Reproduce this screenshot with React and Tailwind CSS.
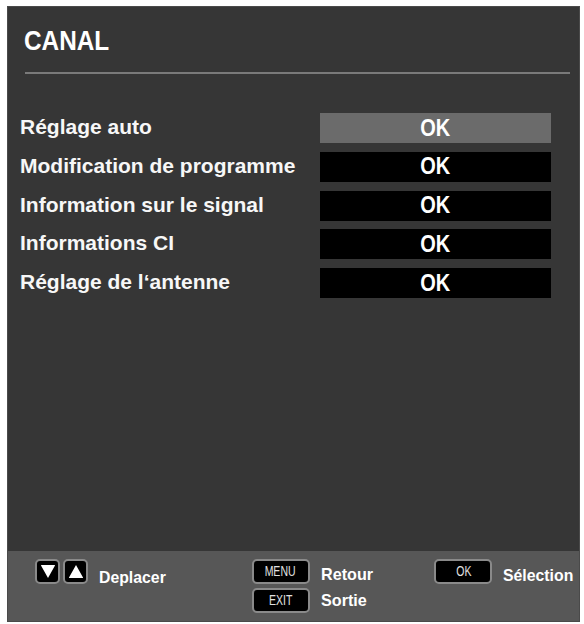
import React from 'react';

const font = { fontFamily: '"Liberation Sans", Arial, sans-serif' };

const rows = [
    { label: 'Réglage auto', active: true },
    { label: 'Modification de programme' },
    { label: 'Information sur le signal' },
    { label: 'Informations CI' },
    { label: 'Réglage de l‘antenne' },
];

const ArrowKey = ({ up }) => (
    <div className="w-[25px] h-[25px] rounded-[5px] bg-black border-2 border-[#8a8a8a] flex items-center justify-center">
        <svg width="16" height="15" viewBox="0 0 16 15">
            {up ? (
                <path d="M8 1 L15 13.5 Q15.3 14 14.5 14 L1.5 14 Q0.7 14 1 13.5 Z" fill="#fff" />
            ) : (
                <path d="M8 14 L15 1.5 Q15.3 1 14.5 1 L1.5 1 Q0.7 1 1 1.5 Z" fill="#fff" />
            )}
        </svg>
    </div>
);

const Key = ({ children }) => (
    <div className="w-[58px] h-[25px] rounded-[5px] bg-black border-2 border-[#8a8a8a] flex items-center justify-center font-normal text-[15px] text-[#e0e0e0]">
        <span className="inline-block scale-x-[0.7]">{children}</span>
    </div>
);

export default function App() {
    return (
        <div className="w-[584px] h-[624px] bg-white pl-[7px] pt-[6px] pr-[4px] pb-[2px]" style={font}>
            <div className="h-full flex flex-col bg-[#363636] border border-[#4a4a4a]">
                <div className="pt-[20px] pl-[16px] text-[28px] leading-none font-bold text-white">
                    <span className="inline-block origin-left scale-x-[0.87]">CANAL</span>
                </div>
                <div className="ml-[17px] mt-[17px] w-[545px] h-[2px] bg-[#7a7a7a]" />

                <div className="mt-[39px] flex flex-col gap-[8.75px]">
                    {rows.map((row) => (
                        <div key={row.label} className="flex items-center h-[30px]">
                            <div className="pl-[12px] w-[312px] text-[21px] font-bold text-[#f7f7f7] leading-none -mt-[3px]">
                                {row.label}
                            </div>
                            <div
                                className={`w-[231px] h-full flex items-center justify-center text-[23px] font-bold text-white leading-none ${
                                    row.active ? 'bg-[#6b6b6b]' : 'bg-black'
                                }`}
                            >
                                <span className="inline-block scale-x-[0.87]">OK</span>
                            </div>
                        </div>
                    ))}
                </div>

                <div className="flex-1" />

                <div className="h-[70px] bg-[#575757] flex pl-[27px] pt-[8px] text-white font-bold text-[17px]">
                    <div className="w-[219px] flex items-start gap-[3px]">
                        <ArrowKey />
                        <ArrowKey up />
                        <span className="ml-[8px] mt-[10px] leading-none inline-block origin-left scale-x-[0.93]">Deplacer</span>
                    </div>
                    <div className="w-[185px] flex flex-col gap-[4px]">
                        <div className="flex items-center gap-[11px]">
                            <Key>MENU</Key>
                            <span className="leading-none mt-[5px] inline-block origin-left scale-x-[0.95]">Retour</span>
                        </div>
                        <div className="flex items-center gap-[11px]">
                            <Key>EXIT</Key>
                            <span className="leading-none inline-block origin-left scale-x-[0.95]">Sortie</span>
                        </div>
                    </div>
                    <div className="flex items-start gap-[11px]">
                        <Key>OK</Key>
                        <span className="leading-none mt-[8px] inline-block origin-left scale-x-[0.93]">Sélection</span>
                    </div>
                </div>
            </div>
        </div>
    );
}
